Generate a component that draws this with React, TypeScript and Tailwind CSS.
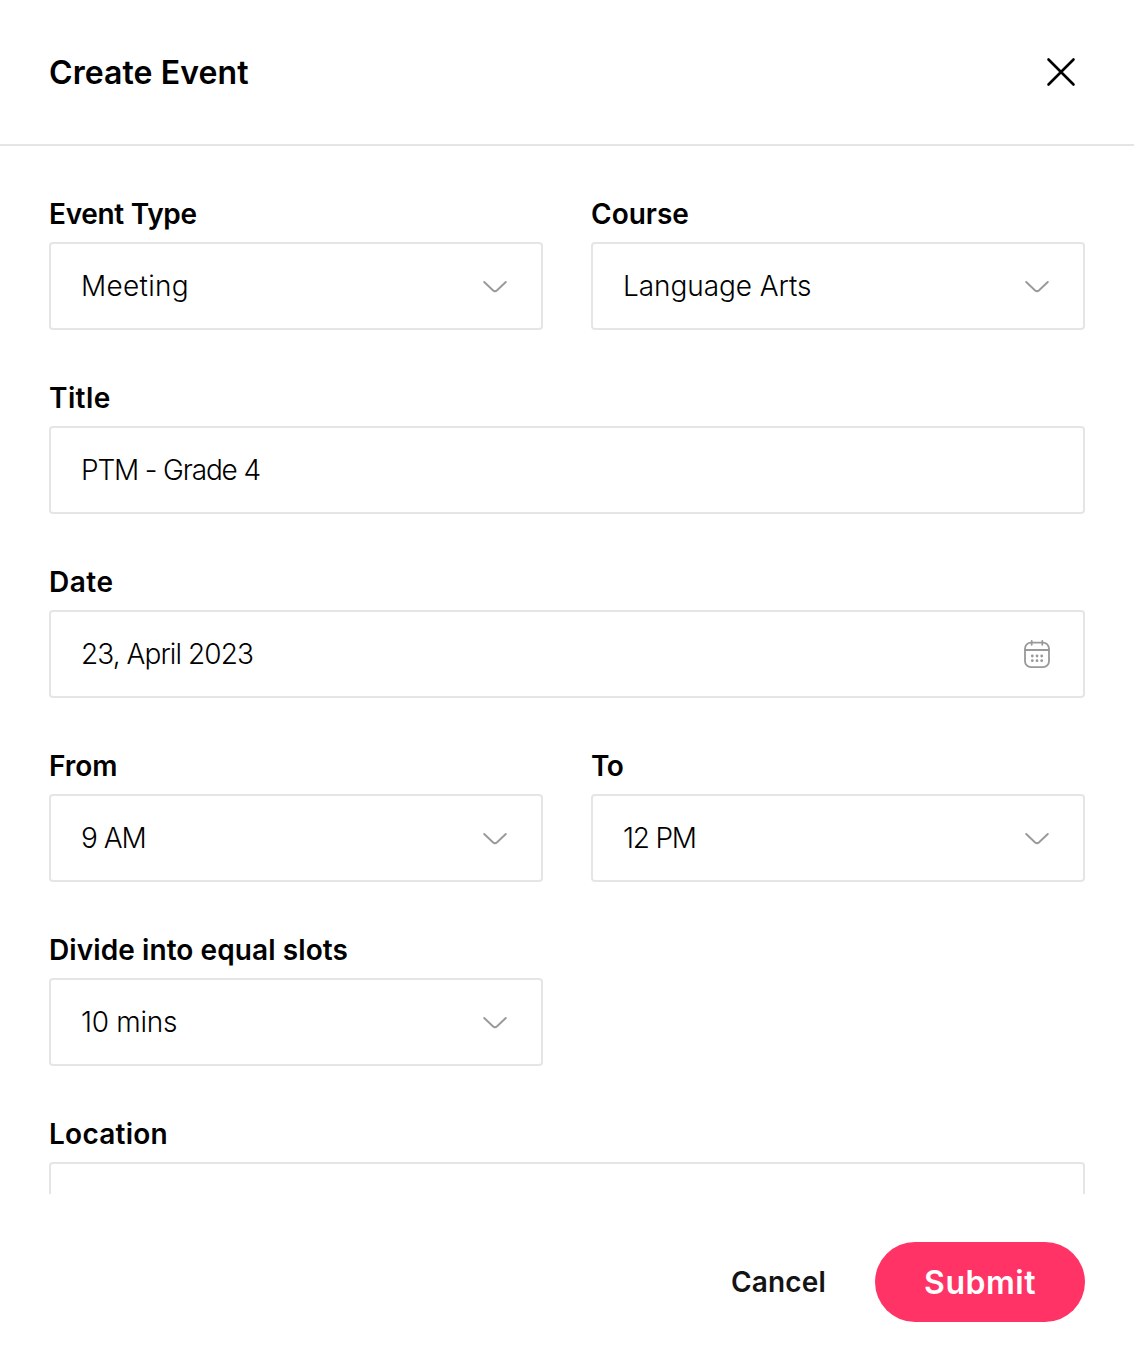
import React from 'react';

const Chevron = () => (
  <svg className="mr-[34px] h-6 w-6 shrink-0" viewBox="0 0 24 24" fill="none" stroke="#999" strokeWidth="1.9" strokeLinecap="round" strokeLinejoin="round">
    <path d="M1.2 8 L9.9 16.3 Q12 18.2 14.1 16.3 L22.8 8" />
  </svg>
);

const dots = [[9.3, 17], [14, 17], [18.7, 17], [9.3, 21.7], [14, 21.7], [18.7, 21.7]];

const Calendar = () => (
  <svg className="mr-[32px] h-[30px] w-[28px] shrink-0" viewBox="0 0 28 30" fill="none" stroke="#999" strokeWidth="1.8" strokeLinecap="round">
    <rect x="2" y="3.7" width="24" height="24.5" rx="6" />
    <path d="M2 11H26M8.7 1.8V5.8M19.3 1.8V5.8" />
    {dots.map(([x, y]) => <circle key={`${x}-${y}`} cx={x} cy={y} r="1.4" fill="#999" stroke="none" />)}
  </svg>
);

type FieldProps = { label: string; labelWidth: number; value?: string; valueWidth?: number; icon?: React.ReactNode; className?: string };

const Fit = ({ text, width }: { text: string; width: number }) => {
  const ref = React.useRef<HTMLSpanElement>(null);
  const [spacing, setSpacing] = React.useState(0);
  React.useLayoutEffect(() => {
    if (ref.current) setSpacing((width - ref.current.offsetWidth) / text.length);
  }, []);
  return <span ref={ref} className="inline-block whitespace-nowrap" style={{ letterSpacing: `${spacing}px` }}>{text}</span>;
};

const Field = ({ label, labelWidth, value, valueWidth = 0, icon, className = '' }: FieldProps) => (
  <div className={className}>
    <div className="h-[46px] text-[28px] leading-[36px] font-semibold"><Fit text={label} width={labelWidth} /></div>
    <div className="flex h-[88px] items-center justify-between rounded-[4px] border-2 border-[#e5e5e5] pl-[30px] text-[28px] leading-[36px] font-light">
      {value && <Fit text={value} width={valueWidth} />}
      {icon}
    </div>
  </div>
);

export default function App() {
  return (
    <main className="flex h-[1370px] w-[1134px] flex-col bg-white font-['Inter',sans-serif] text-black">
      <header className="flex h-[146px] shrink-0 items-center justify-between border-b-2 border-[#e5e5e5] pr-[58px] pl-[49px]">
        <h1 className="pt-0.5 text-[32px] leading-10 font-semibold"><Fit text="Create Event" width={200} /></h1>
        <button aria-label="Close">
          <svg className="h-[30px] w-[30px]" viewBox="0 0 30 30" fill="none" stroke="black" strokeWidth="2.6" strokeLinecap="round"><path d="M2.5 2.5L27.5 27.5M27.5 2.5L2.5 27.5" /></svg>
        </button>
      </header>
      <form className="grid h-[1048px] shrink-0 auto-rows-[134px] grid-cols-2 content-start gap-x-12 gap-y-[50px] overflow-hidden px-[49px] pt-[50px]">
        <Field label="Event Type" labelWidth={148} value="Meeting" valueWidth={108} icon={<Chevron />} />
        <Field label="Course" labelWidth={98} value="Language Arts" valueWidth={188} icon={<Chevron />} />
        <Field className="col-span-2" label="Title" labelWidth={62} value="PTM - Grade 4" valueWidth={179} />
        <Field className="col-span-2" label="Date" labelWidth={64} value="23, April 2023" valueWidth={172} icon={<Calendar />} />
        <Field label="From" labelWidth={69} value="9 AM" valueWidth={65} icon={<Chevron />} />
        <Field label="To" labelWidth={32} value="12 PM" valueWidth={73} icon={<Chevron />} />
        <Field className="col-span-2 w-[494px]" label="Divide into equal slots" labelWidth={299} value="10 mins" valueWidth={96} icon={<Chevron />} />
        <Field className="col-span-2" label="Location" labelWidth={119} />
      </form>
      <footer className="flex flex-1 items-start justify-end gap-[49px] pt-12 pr-[49px]">
        <button className="h-20 text-[28px] font-semibold text-[#141414]"><Fit text="Cancel" width={95} /></button>
        <button className="h-20 w-[210px] rounded-full bg-[#ff3366] pt-0.5 text-[32px] font-semibold text-white"><Fit text="Submit" width={112} /></button>
      </footer>
    </main>
  );
}
